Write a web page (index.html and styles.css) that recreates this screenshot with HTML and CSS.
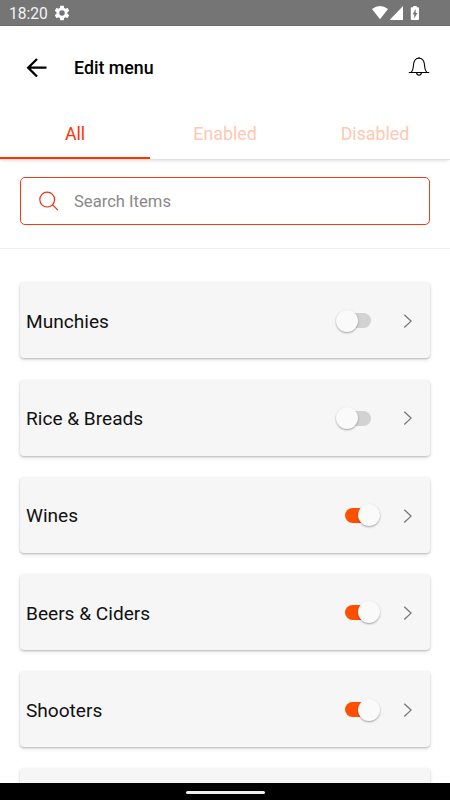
FILE: index.html
```html
<!DOCTYPE html>
<html lang="en">
<head>
<meta charset="utf-8">
<title>Edit menu</title>
<link rel="stylesheet" href="styles.css">
</head>
<body>
<div class="status">
  <span class="time">18:20</span>
  <svg class="gear" width="16" height="16" viewBox="1.500 1.500 21 21"><path fill="#fff" d="M19.14 12.94c.04-.3.06-.61.06-.94 0-.32-.02-.64-.07-.94l2.03-1.58c.18-.14.23-.41.12-.61l-1.92-3.32c-.12-.22-.37-.29-.59-.22l-2.39.96c-.5-.38-1.03-.7-1.62-.94l-.36-2.54c-.04-.24-.24-.41-.48-.41h-3.84c-.24 0-.43.17-.47.41l-.36 2.54c-.59.24-1.13.57-1.62.94l-2.39-.96c-.22-.08-.47 0-.59.22L2.74 8.87c-.12.21-.08.47.12.61l2.03 1.58c-.05.3-.09.63-.09.94s.02.64.07.94l-2.03 1.58c-.18.14-.23.41-.12.61l1.92 3.32c.12.22.37.29.59.22l2.39-.96c.5.38 1.03.7 1.62.94l.36 2.54c.05.24.24.41.48.41h3.84c.24 0 .44-.17.47-.41l.36-2.54c.59-.24 1.13-.56 1.62-.94l2.39.96c.22.08.47 0 .59-.22l1.92-3.32c.12-.22.07-.47-.12-.61l-2.01-1.58zM12 15.6A3.6 3.6 0 1 1 12 8.4a3.6 3.6 0 0 1 0 7.2z"/></svg>
  <svg class="signals" width="50" height="16" viewBox="0 0 50 16"><path fill="#fff" d="M0 4Q8-2 16 4L8 14.200ZM31 .9V14.900H17.600Z"/><path fill="#fff" fill-rule="evenodd" d="M41.200 1h3.500v1.200H46q1 0 1 .9v11q0 .9-1 .9h-6.200q-1 0-1-.9v-11q0-.9 1-.9h1.400zM43.700 4l-3.100 5.300h1.700v4.200l3.100-5.500h-1.700z"/></svg>
</div>
<header class="header">
  <svg class="back" width="22" height="20" viewBox="0 0 22 20"><path d="M11 1 2.200 9.700 11 18.500M2.200 9.700H20.500" fill="none" stroke="#000" stroke-width="2.300"/></svg>
  <h1>Edit menu</h1>
  <svg class="bell" width="22" height="22" viewBox="0 0 22 22"><g fill="none" stroke="#000" stroke-width="1.100"><path d="M.8 16.500H21.200M3.200 16.300Q4.900 14.500 5.200 11.500L5.700 7.500C6.200 4 8 2.300 11 2.300S15.800 4 16.300 7.500L16.800 11.500Q17.100 14.500 18.800 16.300M8.500 16.700C9 20 13 20 13.500 16.700"/><path d="M11 1V2.500"/></g></svg>
</header>
<nav class="tabs">
  <span class="tab active">All</span><span class="tab">Enabled</span><span class="tab">Disabled</span>
</nav>
<section class="search-area">
  <div class="search">
    <svg width="20" height="20" viewBox="0 0 20 20"><g fill="none" stroke="#f52d0b" stroke-width="1.200"><circle cx="8.200" cy="8.600" r="7.400"/><path d="m13.300 13.700 5.500 5.500"/></g></svg>
    <span>Search Items</span>
  </div>
</section>
<main class="list">
  <div class="card"><span class="name">Munchies</span><span class="toggle"></span><svg class="chev" width="10" height="16" viewBox="0 0 10 16"><path d="m1.300 1.700 6.700 6.400-6.700 6.400"/></svg></div>
  <div class="card"><span class="name">Rice &amp; Breads</span><span class="toggle"></span><svg class="chev" width="10" height="16" viewBox="0 0 10 16"><path d="m1.300 1.700 6.700 6.400-6.700 6.400"/></svg></div>
  <div class="card"><span class="name">Wines</span><span class="toggle on"></span><svg class="chev" width="10" height="16" viewBox="0 0 10 16"><path d="m1.300 1.700 6.700 6.400-6.700 6.400"/></svg></div>
  <div class="card"><span class="name">Beers &amp; Ciders</span><span class="toggle on"></span><svg class="chev" width="10" height="16" viewBox="0 0 10 16"><path d="m1.300 1.700 6.700 6.400-6.700 6.400"/></svg></div>
  <div class="card"><span class="name">Shooters</span><span class="toggle on"></span><svg class="chev" width="10" height="16" viewBox="0 0 10 16"><path d="m1.300 1.700 6.700 6.400-6.700 6.400"/></svg></div>
  <div class="card"></div>
</main>
<footer class="navbar"><span class="handle"></span></footer>
</body>
</html>
```
FILE: styles.css
```css
* { box-sizing: border-box; }
body {
  margin: 0;
  width: 450px;
  height: 800px;
  overflow: hidden;
  display: flex;
  flex-direction: column;
  background: #fff;
  color: #111;
  font-family: Roboto, sans-serif;
}
svg { display: block; flex: none; }
.status {
  flex: none;
  height: 26px;
  padding: 0 28px 0 9px;
  display: flex;
  align-items: center;
  background: #757575;
  border-bottom: 1px solid #686868;
  color: #f4f4f4;
}
.time { width: 45px; font-size: 15.6px; line-height: 20px; padding-top: 3px; }
.gear { margin-top: 1px; }
.signals { margin-left: auto; }
.header {
  flex: none;
  height: 82px;
  padding: 0 20px 0 26px;
  display: flex;
  align-items: center;
}
.back { margin-top: 1px; }
.header h1 {
  margin: 1px 0 0 26px;
  font-size: 17.8px;
  line-height: 22px;
  font-weight: 500;
  color: #000;
}
.bell { margin-left: auto; }
.tabs {
  flex: none;
  height: 51px;
  display: flex;
  box-shadow: 0 1px 0 #e0e0e0, 0 4px 3px -2px rgba(0,0,0,.12);
}
.tab {
  flex: 1;
  text-align: center;
  font-size: 17.8px;
  line-height: 52px;
  color: #ffc8b0;
}
.tab.active { color: #ff3200; border-bottom: 2px solid #ff3200; }
.search-area {
  flex: none;
  height: 90px;
  padding: 18px 20px 0;
  border-bottom: 1px solid #eee;
}
.search {
  height: 47.5px;
  padding-left: 18px;
  display: flex;
  align-items: center;
  gap: 15px;
  border: 1px solid #f53a18;
  border-radius: 5px;
  color: #888;
  font-size: 16.6px;
}
.search span { padding-top: 1px; }
.list {
  flex: 1;
  min-height: 0;
  overflow: hidden;
  padding: 33.4px 20.3px 0;
  display: flex;
  flex-direction: column;
  gap: 21.2px;
}
.card {
  flex: none;
  height: 76px;
  padding: 0 17px 0 5.7px;
  display: flex;
  align-items: center;
  background: #f6f6f6;
  border-radius: 4px;
  box-shadow: 0 1px 2px rgba(0,0,0,.2), 0 2px 4px rgba(0,0,0,.1);
}
.name { font-size: 19.1px; line-height: 24px; padding-top: 3.4px; }
.toggle {
  position: relative;
  width: 44px;
  height: 22px;
  margin: 1px 23px 0 auto;
}
.toggle::before {
  content: "";
  position: absolute;
  left: 9px;
  top: 3.5px;
  width: 26px;
  height: 15px;
  border-radius: 8px;
  background: #d2d2d2;
}
.toggle::after {
  content: "";
  position: absolute;
  left: 0;
  top: 0;
  width: 22px;
  height: 22px;
  border-radius: 50%;
  background: #fafafa;
  box-shadow: 0 1px 2px rgba(0,0,0,.35);
}
.toggle.on::before { background: #ff5000; }
.toggle.on::after { left: 22px; }
.chev { margin-top: 1.5px; }
.chev path { fill: none; stroke: #777; stroke-width: 1.3; }
.navbar {
  flex: none;
  height: 17px;
  display: flex;
  align-items: center;
  justify-content: center;
  background: #000;
}
.handle { width: 79px; height: 3px; margin-top: 2px; border-radius: 2px; background: #eee; }
```
